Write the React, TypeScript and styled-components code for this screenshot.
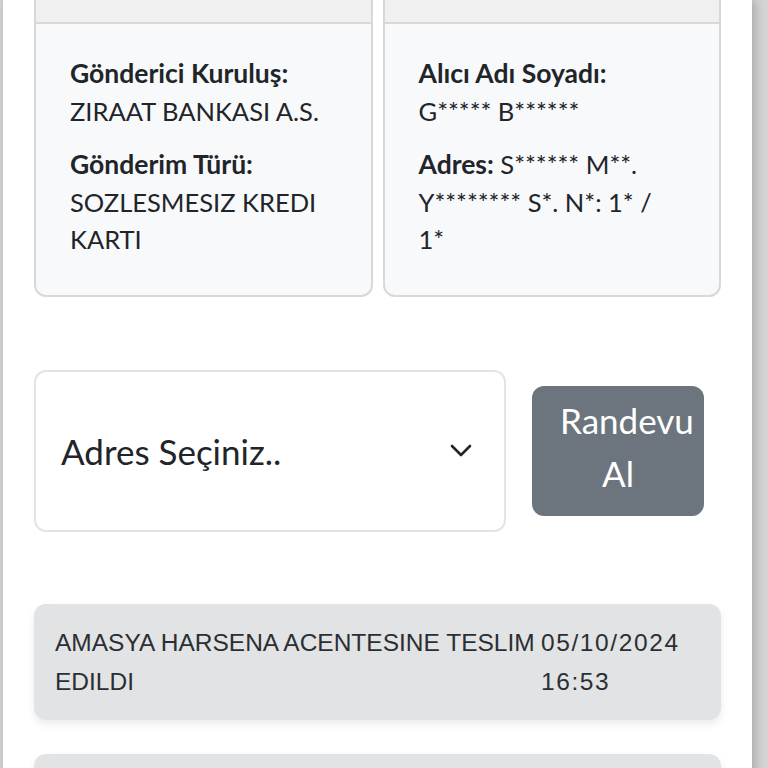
import React from "react";
import styled, { createGlobalStyle } from "styled-components";

const GlobalStyle = createGlobalStyle`
  html, body {
    margin: 0;
    padding: 0;
    background: #d4d4d4;
  }
  body {
    font-family: Lato, "Liberation Sans", Arial, sans-serif;
    color: #212529;
  }
`;

const Panel = styled.div`
  margin-left: 3px;
  width: 749px;
  min-height: 768px;
  background: #ffffff;
  box-shadow: 3px 0 10px rgba(0, 0, 0, 0.22);
  padding: 0 31px;
  box-sizing: border-box;
`;

const CardRow = styled.div`
  display: grid;
  grid-template-columns: 1fr 1fr;
  gap: 10px;
`;

const InfoCard = styled.div`
  background: #f8f9fa;
  border: 2px solid #d7d8da;
  border-top: none;
  border-radius: 0 0 12px 12px;
  overflow: hidden;
`;

const CardHeader = styled.div`
  height: 22px;
  background: #f0f0f1;
  border-bottom: 2px solid #d7d8da;
`;

const CardBody = styled.div`
  padding: 31px 42px 36px 34px;
  font-size: 25.5px;
  line-height: 37.5px;
`;

const Field = styled.p`
  margin: 0;
  & + & {
    margin-top: 16px;
  }
`;

const Label = styled.span<{ $block?: boolean }>`
  font-weight: 700;
  font-size: 26.5px;
  display: ${(p) => (p.$block ? "block" : "inline")};
`;

const ActionRow = styled.div`
  display: flex;
  align-items: center;
  gap: 26px;
  margin-top: 73px;
`;

const Select = styled.div`
  width: 472px;
  height: 162px;
  box-sizing: border-box;
  border: 2px solid #e3e4e6;
  border-radius: 12px;
  display: flex;
  align-items: center;
  justify-content: space-between;
  padding: 0 32px 0 25px;
  font-size: 35px;
  color: #212529;
`;

const Chevron = styled.svg`
  width: 22px;
  height: 14px;
`;

const Button = styled.button`
  width: 172px;
  height: 130px;
  box-sizing: border-box;
  padding: 0 28px 7px;
  border: none;
  border-radius: 12px;
  background: #6c757d;
  color: #ffffff;
  font-family: inherit;
  font-size: 35px;
  line-height: 53px;
  text-align: center;
`;

const Timeline = styled.div`
  display: flex;
  flex-direction: column;
  gap: 34px;
  margin-top: 72px;
`;

const Event = styled.div`
  display: grid;
  grid-template-columns: 486px 1fr;
  background: #e2e3e5;
  border-radius: 12px;
  padding: 19px 20px 19px 21px;
  min-height: 116px;
  box-sizing: border-box;
  box-shadow: 0 4px 8px rgba(0, 0, 0, 0.08);
  font-family: "Liberation Sans", Arial, sans-serif;
  font-size: 24.5px;
  line-height: 39px;
  color: #2b2f33;
`;

const EventDate = styled.div`
  letter-spacing: 1.6px;
`;

const events = [
  { text: "AMASYA HARSENA ACENTESINE TESLIM EDILDI", date: "05/10/2024", time: "16:53" },
  { text: "", date: "", time: "" },
];

export default function App() {
  return (
    <>
      <GlobalStyle />
      <Panel>
        <CardRow>
          <InfoCard>
            <CardHeader />
            <CardBody>
              <Field>
                <Label $block>Gönderici Kuruluş:</Label>
                ZIRAAT BANKASI A.S.
              </Field>
              <Field>
                <Label $block>Gönderim Türü:</Label>
                SOZLESMESIZ KREDI KARTI
              </Field>
            </CardBody>
          </InfoCard>
          <InfoCard>
            <CardHeader />
            <CardBody>
              <Field>
                <Label $block>Alıcı Adı Soyadı:</Label>
                G***** B******
              </Field>
              <Field>
                <Label>Adres:</Label> S****** M**. Y******** S*. N*: 1* / 1*
              </Field>
            </CardBody>
          </InfoCard>
        </CardRow>

        <ActionRow>
          <Select>
            <span>Adres Seçiniz..</span>
            <Chevron viewBox="0 0 22 14" fill="none">
              <path d="M2 2l9 9 9-9" stroke="#212529" strokeWidth="2.6" strokeLinecap="round" strokeLinejoin="round" />
            </Chevron>
          </Select>
          <Button>Randevu Al</Button>
        </ActionRow>

        <Timeline>
          {events.map((e, i) => (
            <Event key={i}>
              <div>{e.text}</div>
              <EventDate>
                {e.date}
                <br />
                {e.time}
              </EventDate>
            </Event>
          ))}
        </Timeline>
      </Panel>
    </>
  );
}
